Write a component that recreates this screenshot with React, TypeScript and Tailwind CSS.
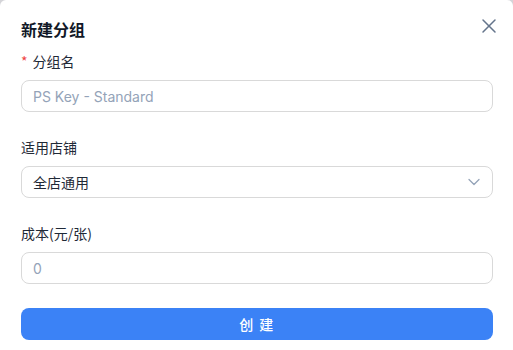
import React from "react";
import { X, ChevronDown } from "lucide-react";

export default function App() {
  return (
    <div className="w-[513px] h-[350px] bg-[#d4d4d8] font-['Inter','Noto_Sans_CJK_SC',sans-serif]">
      <div className="w-full h-full bg-white rounded-t-md pl-[21px] pr-5 pt-[17px] relative">
        <div className="flex items-start justify-between">
          <h2 className="text-base leading-6 font-semibold text-[#111827] font-['Noto_Sans_CJK_SC',sans-serif]">新建分组</h2>
          <button className="mt-[-3px] mr-[-8px] text-[#64748b]">
            <X size={24} strokeWidth={1.5} />
          </button>
        </div>
        <div className="mt-[9px] flex flex-col gap-6">
          <div>
            <label className="block text-sm leading-[22px] text-[#1f2937] mb-2 font-['Noto_Sans_CJK_SC',sans-serif]">
              <span className="text-[#ef4444] mr-[5px]">*</span>分组名
            </label>
            <input
              className="w-full h-8 border border-[#d9d9d9] rounded-lg px-[11px] text-sm text-[#1f2937] placeholder:text-[#94a3b8] outline-none"
              placeholder="PS Key - Standard"
            />
          </div>
          <div>
            <label className="block text-sm leading-[22px] text-[#1f2937] mb-2 font-['Noto_Sans_CJK_SC',sans-serif]">适用店铺</label>
            <div className="w-full h-8 border border-[#d9d9d9] rounded-lg pl-[11px] pr-2 flex items-center justify-between">
              <span className="text-sm text-[#1f2937] font-['Noto_Sans_CJK_SC',sans-serif]">全店通用</span>
              <ChevronDown size={20} strokeWidth={1.5} className="text-[#94a3b8]" />
            </div>
          </div>
          <div>
            <label className="block text-sm leading-[22px] text-[#1f2937] mb-2 font-['Noto_Sans_CJK_SC',sans-serif]">成本(元/张)</label>
            <input
              className="w-full h-8 border border-[#d9d9d9] rounded-lg px-[11px] text-sm text-[#1f2937] placeholder:text-[#94a3b8] outline-none"
              placeholder="0"
            />
          </div>
          <button className="w-full h-8 rounded-lg bg-[#3b82f6] text-white text-sm font-medium font-['Noto_Sans_CJK_SC',sans-serif] tracking-[0.1em]">
            创 建
          </button>
        </div>
      </div>
    </div>
  );
}
